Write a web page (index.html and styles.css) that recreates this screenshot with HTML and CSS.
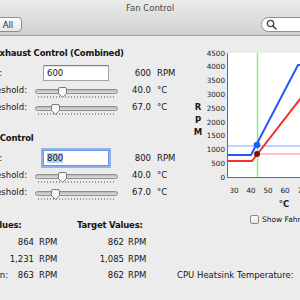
FILE: index.html
```html
<!DOCTYPE html>
<html lang="en">
<head>
  <meta charset="utf-8">
  <title>Fan Control</title>
  <link rel="stylesheet" href="styles.css">
</head>
<body>
  <div class="window">
    <div class="toolbar">
      <div class="title">Fan Control</div>
      <div class="toolbar-row">
        <button class="show-all">Show All</button>
        <div class="search">
          <svg width="11" height="11" viewBox="0 0 11 11">
            <circle cx="4.5" cy="4.5" r="3.2" fill="none" stroke="#444" stroke-width="1.3"/>
            <path d="M7 7L10 10" stroke="#444" stroke-width="1.6" stroke-linecap="round"/>
          </svg>
        </div>
      </div>
    </div>

    <div class="main">
      <div class="controls">
        <section class="group">
          <h3 class="group-title">Exhaust Control (Combined)</h3>
          <div class="row">
            <span class="label speed-label">Min Speed:</span>
            <div class="field">600</div>
            <span class="num">600</span><span class="unit">RPM</span>
          </div>
          <div class="row">
            <span class="label">Low Threshold:</span>
            <div class="slider">
              <div class="track"></div>
              <div class="ticks"></div>
              <svg class="knob" style="left: 28%" width="9" height="11" viewBox="0 0 9 11"><path d="M0.5 2Q0.5 0.5 2 0.5H7Q8.5 0.5 8.5 2V6.5L4.5 10.5L0.5 6.5Z"/></svg>
            </div>
            <span class="num">40.0</span><span class="unit">°C</span>
          </div>
          <div class="row">
            <span class="label">High Threshold:</span>
            <div class="slider">
              <div class="track"></div>
              <div class="ticks"></div>
              <svg class="knob" style="left: 18.7%" width="9" height="11" viewBox="0 0 9 11"><path d="M0.5 2Q0.5 0.5 2 0.5H7Q8.5 0.5 8.5 2V6.5L4.5 10.5L0.5 6.5Z"/></svg>
            </div>
            <span class="num">67.0</span><span class="unit">°C</span>
          </div>
        </section>

        <section class="group">
          <h3 class="group-title second">Intake Control</h3>
          <div class="row">
            <span class="label speed-label">Min Speed:</span>
            <div class="field focused"><span class="sel">800</span></div>
            <span class="num">800</span><span class="unit">RPM</span>
          </div>
          <div class="row">
            <span class="label">Low Threshold:</span>
            <div class="slider">
              <div class="track"></div>
              <div class="ticks"></div>
              <svg class="knob" style="left: 28%" width="9" height="11" viewBox="0 0 9 11"><path d="M0.5 2Q0.5 0.5 2 0.5H7Q8.5 0.5 8.5 2V6.5L4.5 10.5L0.5 6.5Z"/></svg>
            </div>
            <span class="num">40.0</span><span class="unit">°C</span>
          </div>
          <div class="row">
            <span class="label">High Threshold:</span>
            <div class="slider">
              <div class="track"></div>
              <div class="ticks"></div>
              <svg class="knob" style="left: 18.7%" width="9" height="11" viewBox="0 0 9 11"><path d="M0.5 2Q0.5 0.5 2 0.5H7Q8.5 0.5 8.5 2V6.5L4.5 10.5L0.5 6.5Z"/></svg>
            </div>
            <span class="num">67.0</span><span class="unit">°C</span>
          </div>
        </section>
      </div>

      <div class="graph">
        <svg class="chart" width="150" height="165" viewBox="190 45 150 165">
          <defs>
            <clipPath id="plot"><rect x="227" y="53" width="113" height="124"/></clipPath>
          </defs>
          <rect x="227" y="53" width="113" height="124" fill="#fff"/>
          <g class="ylabels" text-anchor="end">
            <text x="225" y="55.6">4500</text>
            <text x="225" y="69.4">4000</text>
            <text x="225" y="83.2">3500</text>
            <text x="225" y="96.9">3000</text>
            <text x="225" y="110.7">2500</text>
            <text x="225" y="124.5">2000</text>
            <text x="225" y="138.3">1500</text>
            <text x="225" y="152">1000</text>
            <text x="225" y="165.8">500</text>
            <text x="225" y="179.6">0</text>
          </g>
          <g class="xlabels" text-anchor="middle">
            <text x="234" y="192.5">30</text>
            <text x="251" y="192.5">40</text>
            <text x="268" y="192.5">50</text>
            <text x="285" y="192.5">60</text>
            <text x="302" y="192.5">70</text>
          </g>
          <g class="axis-title" text-anchor="middle">
            <text x="198" y="109.5">R</text>
            <text x="198" y="123">P</text>
            <text x="198" y="135">M</text>
            <text x="284" y="207">°C</text>
          </g>
          <g clip-path="url(#plot)" fill="none">
            <rect class="temp-line" x="256.8" y="53" width="1.4" height="124"/>
            <path d="M227 146H340" stroke="#7fa5ff" stroke-width="1.2"/>
            <path d="M258 154H340" stroke="#ff8a8a" stroke-width="1.2"/>
            <path d="M227 155H251L298 65H340" stroke="#2458f5" stroke-width="2"/>
            <path d="M227 161H252L300 99L340 47" stroke="#f2312a" stroke-width="2"/>
          </g>
          <path d="M227.5 53V177.5H340" stroke="#6a6a6a" fill="none"/>
          <circle cx="257" cy="145" r="3.3" fill="#1f5dff"/>
          <circle cx="257" cy="154" r="3" fill="#8e0b0b"/>
        </svg>
        <label class="fahrenheit"><span class="checkbox"></span>Show Fahrenheit</label>
      </div>
    </div>

    <div class="values">
      <span class="values-title current">Current Values:</span>
      <span class="values-title target">Target Values:</span>

      <span class="vlabel"></span>
      <span class="vnum">864</span><span class="vunit">RPM</span>
      <span class="vnum">862</span><span class="vunit">RPM</span>

      <span class="vlabel"></span>
      <span class="vnum">1,231</span><span class="vunit">RPM</span>
      <span class="vnum">1,085</span><span class="vunit">RPM</span>

      <span class="vlabel">Intake Fan:</span>
      <span class="vnum">863</span><span class="vunit">RPM</span>
      <span class="vnum">862</span><span class="vunit">RPM</span>
      <span class="temp">CPU Heatsink Temperature:</span>
    </div>
  </div>
</body>
</html>
```

FILE: styles.css
```css
body {
  margin: 0;
  font-family: "DejaVu Sans", sans-serif;
  font-size: 8.5px;
  color: #141414;
}
.window {
  width: 300px;
  height: 300px;
  overflow: hidden;
  background-color: #ececec;
}

/* unified title bar + toolbar */
.toolbar {
  height: 35px;
  border-bottom: 1px solid #a2a2a2;
  background: linear-gradient(#ebebeb, #d0d0d0);
}
.title {
  padding-top: 2px;
  line-height: 12px;
  text-align: center;
  color: #4a4a4a;
}
.toolbar-row {
  display: flex;
  align-items: center;
  margin-top: 3px;
  height: 15px;
}
.show-all {
  margin-left: -34px;
  height: 15px;
  padding: 0 8px 0 10px;
  font: inherit;
  color: #222;
  border: 1px solid #8e8e8e;
  border-radius: 4px;
  background: linear-gradient(#fdfdfd, #e6e6e6);
}
.search {
  margin-left: auto;
  margin-right: -45px;
  width: 84px;
  height: 15px;
  box-sizing: border-box;
  display: flex;
  align-items: center;
  padding-left: 4px;
  border: 1px solid #909090;
  border-radius: 8px;
  background-color: #fff;
}

/* controls + graph */
.main {
  display: grid;
  grid-template-columns: 254px 1fr;
  margin-left: -64px;
}
.controls {
  padding-top: 10px;
  padding-bottom: 18px;
}
.group + .group {
  margin-top: 16px;
}
.group-title {
  margin: 0 0 4px 0;
  padding-left: 58px;
  font-size: 8.5px;
  line-height: 14px;
  letter-spacing: -0.2px;
}
.group-title.second {
  padding-left: 32px;
}
.row {
  display: grid;
  grid-template-columns: 99px 83px 33px 30px;
  align-items: center;
  height: 17px;
}
.label {
  text-align: right;
  padding-right: 8px;
  white-space: nowrap;
}
.speed-label {
  padding-right: 33px;
}
.num {
  text-align: right;
}
.unit {
  padding-left: 6px;
}
.field {
  margin-left: 8px;
  width: 66px;
  height: 16px;
  box-sizing: border-box;
  padding-left: 3px;
  line-height: 14px;
  border: 1px solid #a3a3a3;
  border-top-color: #808080;
  background-color: #fff;
  box-shadow: inset 0 1px 1px rgba(0, 0, 0, 0.12);
}
.field.focused {
  border-color: #6f93d6;
  box-shadow: 0 0 0 2px #8fb3ee;
}
.sel {
  background-color: #b3d2fb;
}
.slider {
  position: relative;
  height: 17px;
  display: flex;
  flex-direction: column;
}
.track {
  margin-top: 8px;
  height: 3px;
  border: 1px solid #8d8d8d;
  border-radius: 3px;
  background: linear-gradient(#b9b9b9, #dedede);
}
.ticks {
  margin: 2px 2px 0 3px;
  height: 3px;
  background: repeating-linear-gradient(90deg, #9a9a9a 0 1px, transparent 1px 3px);
}
.knob {
  position: absolute;
  top: 6px;
}
.knob path {
  fill: #f7f7f7;
  stroke: #7a7a7a;
}

.graph {
  margin-bottom: -6px;
}
.chart {
  display: block;
  margin-top: 9px;
}
.chart text {
  font-size: 7.2px;
  fill: #1a1a1a;
}
.chart .axis-title text {
  font-size: 8.5px;
  font-weight: bold;
}
.chart .temp-line {
  fill: #7cee7c;
}
.fahrenheit {
  display: flex;
  align-items: center;
  gap: 3px;
  margin-top: 4px;
  height: 10px;
  padding-left: 60px;
  font-size: 7.5px;
  white-space: nowrap;
}
.checkbox {
  width: 9px;
  height: 9px;
  box-sizing: border-box;
  border: 1px solid #8a8a8a;
  border-radius: 2px;
  background: linear-gradient(#ffffff, #e4e4e4);
}

/* bottom readouts */
.values {
  display: grid;
  grid-template-columns: 72px 26px 43px 47px 53px auto;
  grid-template-rows: 16px repeat(3, 16.5px);
  align-items: center;
  margin-left: -64px;
  white-space: nowrap;
}
.values-title {
  align-self: start;
  line-height: 14px;
  font-weight: bold;
  letter-spacing: -0.2px;
}
.values-title.current {
  grid-column: 1 / 4;
  padding-left: 14px;
}
.values-title.target {
  grid-column: 4 / 7;
}
.vlabel {
  grid-column: 1;
}
.vlabel,
.vnum {
  text-align: right;
}
.vunit {
  padding-left: 5px;
}
.vnum + .vunit + .vnum + .vunit {
  padding-left: 4px;
}
.temp {
  grid-column: 6;
  grid-row: 4;
}
```
